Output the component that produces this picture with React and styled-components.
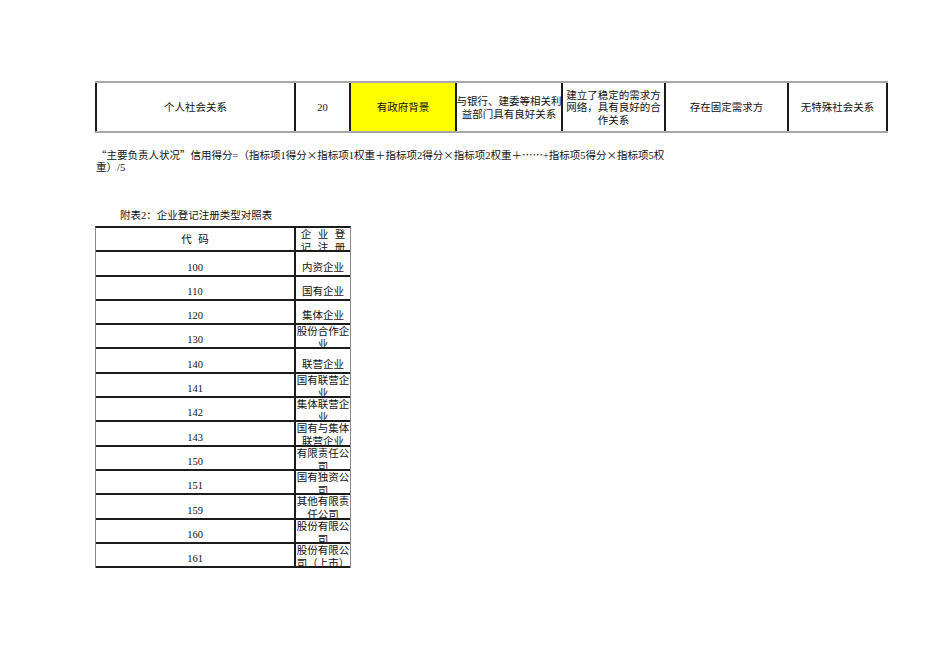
import React from 'react';
import styled, { createGlobalStyle } from 'styled-components';

const Global = createGlobalStyle`
  html, body { margin: 0; padding: 0; background: #ffffff; }
  body {
    font-family: "Liberation Serif", "Noto Sans CJK SC", serif;
    font-size: 10.5px;
    color: #111111;
  }
`;

const Page = styled.div`
  width: 950px;
  height: 672px;
  box-sizing: border-box;
  padding: 81px 0 0 95px;
  overflow: hidden;
`;

const ScoreRow = styled.div`
  display: grid;
  grid-template-columns: 199px 55px 106px 106px 103px 123px 101px;
  width: 793px;
  height: 52px;
  box-sizing: border-box;
  border-top: 2px solid #a8a8a8;
  border-bottom: 2px solid #a8a8a8;
`;

const ScoreCell = styled.div`
  display: flex;
  flex-direction: column;
  align-items: center;
  justify-content: center;
  text-align: center;
  white-space: nowrap;
  box-sizing: border-box;
  border-left: 2px solid #1c1c1c;
  ${p => (p.$last ? 'border-right: 2px solid #1c1c1c;' : '')}
  background: ${p => (p.$highlight ? '#ffff00' : 'transparent')};
  line-height: 12.5px;
  padding-top: 3px;
`;

const Note = styled.p`
  margin: 16px 0 0 1px;
  line-height: 12px;
  white-space: nowrap;
`;

const Wide = styled.span`
  font-family: "Noto Sans CJK SC", sans-serif;
`;

const Title = styled.div`
  margin: 36px 0 0 25px;
  line-height: 12px;
`;

const CodeTable = styled.div`
  margin-top: 4px;
  width: 256px;
  box-sizing: border-box;
  border-top: 2px solid #1c1c1c;
  border-left: 1px solid #8a8a8a;
  border-right: 1px solid #8a8a8a;
`;

const CodeRow = styled.div`
  display: grid;
  grid-template-columns: 198px 1fr;
  height: 24.3px;
  box-sizing: border-box;
  border-bottom: 2px solid #1c1c1c;
`;

const CodeCell = styled.div`
  display: flex;
  justify-content: center;
  align-items: ${p => (p.$head ? 'center' : 'flex-end')};
  padding-bottom: ${p => (p.$head ? '0' : '1px')};
  line-height: 13px;
  word-spacing: ${p => (p.$head ? '4px' : '0')};
`;

const TypeCell = styled.div`
  display: flex;
  justify-content: center;
  align-items: ${p => (p.$wrap ? 'flex-start' : 'flex-end')};
  padding: 0 0 ${p => (p.$wrap ? '0' : '1px')};
  box-sizing: border-box;
  border-left: 2px solid #1c1c1c;
  text-align: center;
  line-height: 13px;
  overflow: hidden;
  word-spacing: ${p => (p.$head ? '4px' : '0')};
`;

const TypeText = styled.span`
  display: block;
  width: 100%;
  line-break: anywhere;
`;

const codes = [
  ['100', '内资企业'],
  ['110', '国有企业'],
  ['120', '集体企业'],
  ['130', '股份合作企业', true],
  ['140', '联营企业'],
  ['141', '国有联营企业', true],
  ['142', '集体联营企业', true],
  ['143', '国有与集体联营企业', true],
  ['150', '有限责任公司', true],
  ['151', '国有独资公司', true],
  ['159', '其他有限责任公司', true],
  ['160', '股份有限公司', true],
  ['161', '股份有限公司（上市）', true],
];

export default function App() {
  return (
    <Page>
      <Global />
      <ScoreRow>
        <ScoreCell>个人社会关系</ScoreCell>
        <ScoreCell>20</ScoreCell>
        <ScoreCell $highlight>有政府背景</ScoreCell>
        <ScoreCell>
          <span>与银行、建委等相关利</span>
          <span>益部门具有良好关系</span>
        </ScoreCell>
        <ScoreCell>
          <span>建立了稳定的需求方</span>
          <span>网络，具有良好的合</span>
          <span>作关系</span>
        </ScoreCell>
        <ScoreCell>存在固定需求方</ScoreCell>
        <ScoreCell $last>无特殊社会关系</ScoreCell>
      </ScoreRow>

      <Note>
        <Wide>“</Wide>主要负责人状况<Wide>”</Wide>信用得分=（指标项1得分<Wide>×</Wide>指标项1权重＋指标项2得分<Wide>×</Wide>指标项2权重＋<Wide>……</Wide>+指标项5得分<Wide>×</Wide>指标项5权
        <br />
        重）/5
      </Note>

      <Title>附表2：企业登记注册类型对照表</Title>

      <CodeTable>
        <CodeRow>
          <CodeCell $head>代 码</CodeCell>
          <TypeCell $wrap $head>
            <TypeText>企 业 登 记 注 册</TypeText>
          </TypeCell>
        </CodeRow>
        {codes.map(([code, name, wrap]) => (
          <CodeRow key={code}>
            <CodeCell>{code}</CodeCell>
            <TypeCell $wrap={wrap}>
              <TypeText>{name}</TypeText>
            </TypeCell>
          </CodeRow>
        ))}
      </CodeTable>
    </Page>
  );
}
